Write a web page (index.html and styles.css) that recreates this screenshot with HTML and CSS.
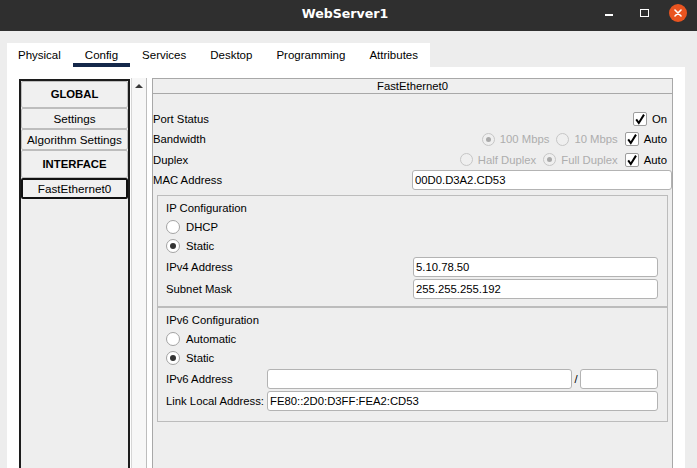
FILE: index.html
```html
<!DOCTYPE html>
<html>
<head>
<meta charset="utf-8">
<title>WebServer1</title>
<link rel="stylesheet" href="styles.css">
</head>
<body>
<div class="window">
  <header class="titlebar">
    <div class="title">WebServer1</div>
    <div class="controls">
      <span class="btn-min"></span>
      <span class="btn-max"></span>
      <span class="btn-close"><svg width="8" height="8" viewBox="0 0 8 8"><path d="M1 1 L7 7 M7 1 L1 7" stroke="#fff" stroke-width="1.6" stroke-linecap="round"/></svg></span>
    </div>
  </header>
  <div class="main">
    <nav class="tabs">
      <div class="tab">Physical</div>
      <div class="tab active">Config</div>
      <div class="tab">Services</div>
      <div class="tab">Desktop</div>
      <div class="tab">Programming</div>
      <div class="tab">Attributes</div>
    </nav>
    <div class="content">
      <aside class="list">
        <div class="item head">GLOBAL</div>
        <div class="item">Settings</div>
        <div class="item">Algorithm Settings</div>
        <div class="item head tall">INTERFACE</div>
        <div class="item selected">FastEthernet0</div>
      </aside>
      <div class="scrollbar"><span class="arrow"></span></div>
      <section class="panel">
        <div class="panel-head">FastEthernet0</div>
        <div class="panel-body">
          <div class="row">
            <div class="label">Port Status</div>
            <div class="opts">
              <div class="opt"><span class="check"><svg width="12" height="12" viewBox="0 0 12 12"><path d="M2.2 6.4 L4.8 10 L10 1.6" stroke="#000" stroke-width="2" fill="none"/></svg></span>On</div>
            </div>
          </div>
          <div class="row">
            <div class="label">Bandwidth</div>
            <div class="opts">
              <div class="opt disabled"><span class="radio dis on"></span>100 Mbps</div>
              <div class="opt disabled"><span class="radio dis"></span>10 Mbps</div>
              <div class="opt"><span class="check"><svg width="12" height="12" viewBox="0 0 12 12"><path d="M2.2 6.4 L4.8 10 L10 1.6" stroke="#000" stroke-width="2" fill="none"/></svg></span>Auto</div>
            </div>
          </div>
          <div class="row">
            <div class="label">Duplex</div>
            <div class="opts">
              <div class="opt disabled"><span class="radio dis"></span>Half Duplex</div>
              <div class="opt disabled"><span class="radio dis on"></span>Full Duplex</div>
              <div class="opt"><span class="check"><svg width="12" height="12" viewBox="0 0 12 12"><path d="M2.2 6.4 L4.8 10 L10 1.6" stroke="#000" stroke-width="2" fill="none"/></svg></span>Auto</div>
            </div>
          </div>
          <div class="row">
            <div class="label">MAC Address</div>
            <div class="input">00D0.D3A2.CD53</div>
          </div>

          <div class="group first">
            <div class="group-title">IP Configuration</div>
            <div class="rrow"><span class="radio"></span>DHCP</div>
            <div class="rrow"><span class="radio on"></span>Static</div>
            <div class="frow"><div class="flabel">IPv4 Address</div><div class="input">5.10.78.50</div></div>
            <div class="frow"><div class="flabel">Subnet Mask</div><div class="input">255.255.255.192</div></div>
          </div>
          <div class="group second">
            <div class="group-title">IPv6 Configuration</div>
            <div class="rrow"><span class="radio"></span>Automatic</div>
            <div class="rrow"><span class="radio on"></span>Static</div>
            <div class="frow"><div class="flabel short">IPv6 Address</div><div class="input"></div><span class="slash">/</span><div class="input prefix"></div></div>
            <div class="frow"><div class="flabel short">Link Local Address:</div><div class="input">FE80::2D0:D3FF:FEA2:CD53</div></div>
          </div>
        </div>
      </section>
    </div>
  </div>
</div>
</body>
</html>
```
FILE: styles.css
```css
* { box-sizing: border-box; margin: 0; padding: 0; }
html, body { height: 100%; }
body {
  font-family: "Liberation Sans", Arial, sans-serif;
  font-size: 11.3px;
  color: #000;
  background: #ededed;
  overflow: hidden;
}
.window { height: 468px; display: flex; flex-direction: column; }

.titlebar {
  height: 31px;
  flex: none;
  background: #2f2f2f;
  display: grid;
  grid-template-columns: 1fr auto 1fr;
  align-items: start;
}
.title {
  grid-column: 2;
  font-family: "DejaVu Sans", sans-serif;
  font-weight: bold;
  font-size: 12.6px;
  color: #fff;
  line-height: 28px;
  margin-right: 7px;
}
.controls {
  grid-column: 3;
  justify-self: end;
  display: flex;
  align-items: flex-start;
  padding-right: 10px;
}
.btn-min { width: 8px; height: 2px; background: #fff; margin-top: 14px; margin-right: 27px; }
.btn-max { width: 9px; height: 8px; border: 1.5px solid #fff; margin-top: 9px; margin-right: 20px; }
.btn-close {
  width: 18px; height: 18px; border-radius: 50%;
  background: #e95420; margin-top: 4px;
  display: flex; align-items: center; justify-content: center;
}

.main {
  flex: 1;
  min-height: 0;
  display: flex;
  flex-direction: column;
  padding: 12px 12px 0 7px;
}
.tabs { display: flex; background: #fff; align-self: flex-start; height: 24px; }
.tab {
  padding: 4px 12px 0;
  line-height: 16px;
  font-size: 11.5px;
  border-bottom: 4px solid transparent;
}
.tab:first-child { padding-left: 11px; }
.tab.active { border-bottom-color: #14284a; }

.content {
  flex: 1;
  min-height: 0;
  background: #fff;
  display: flex;
  padding: 11px 12px 0;
}
.list {
  width: 111px;
  flex: none;
  margin-top: 1px;
  border: 2px solid #1c1c1c;
  border-bottom: none;
  background: #eeeeee;
  display: flex;
  flex-direction: column;
  font-size: 11.7px;
}
.item {
  height: 21px;
  border: 1px solid #bdbdbd;
  border-radius: 2px;
  background: #f0f0f0;
  text-align: center;
  line-height: 20px;
  white-space: nowrap;
}
.item.head { font-weight: bold; height: 27px; line-height: 25px; font-size: 11.3px; }
.item.head.tall { height: 28px; line-height: 26px; }
.item.selected { border: 2px solid #111; line-height: 18px; }

.scrollbar {
  width: 16px;
  flex: none;
  margin: 0 5px 0 1px;
  background: #f7f7f7;
  border-left: 1px solid #d6d6d6;
  border-right: 1px solid #bdbdbd;
  display: flex;
  justify-content: center;
  padding-top: 6px;
}
.arrow {
  width: 0; height: 0;
  border-left: 4px solid transparent;
  border-right: 4px solid transparent;
  border-bottom: 4px solid #3a3a3a;
}

.panel {
  flex: 1;
  border: 1px solid #a8a8a8;
  border-bottom: none;
  background: #eeeeee;
  display: flex;
  flex-direction: column;
}
.panel-head {
  height: 15px;
  border-bottom: 1px solid #a8a8a8;
  text-align: center;
  line-height: 14px;
  background: #efefef;
}
.panel-body { padding-top: 14px; }

.row { display: flex; align-items: center; height: 20.5px; padding-top: 1px; }
.label { width: 259px; flex: none; }
.opts {
  flex: 1;
  display: flex;
  justify-content: flex-end;
  align-items: center;
  gap: 7px;
  padding-right: 5px;
}
.opt { display: flex; align-items: center; gap: 5px; }
.disabled { color: #adadad; }

.check {
  width: 14px; height: 14px;
  border: 1px solid #9d9d9d;
  border-radius: 2px;
  background: #fff;
  display: flex; align-items: center; justify-content: center;
}
.radio {
  width: 14px; height: 14px;
  flex: none;
  border-radius: 50%;
  border: 1px solid #a3a3a3;
  background: #fff;
  display: flex; align-items: center; justify-content: center;
}
.radio.on::after {
  content: "";
  width: 6px; height: 6px;
  border-radius: 50%;
  background: #333;
}
.radio.dis { width: 13px; height: 13px; border-color: #c6c6c6; background: #efefef; }
.radio.dis.on::after { width: 5px; height: 5px; background: #a9a9a9; }

.input {
  flex: 1;
  height: 20px;
  border: 1px solid #b3b3b3;
  border-radius: 3px;
  background: #fff;
  padding-left: 2px;
  line-height: 18px;
  white-space: nowrap;
  overflow: hidden;
}
.row .input { margin-top: -1px; }
.input.prefix { flex: none; width: 78px; }
.slash { width: 8px; text-align: center; flex: none; }

.group {
  margin: 0 4px;
  border: 1px solid #bcbcbc;
  padding: 4px 9px 7px 8px;
}
.group.first { margin-top: 5px; }
.group.second { padding-bottom: 10px; }
.group-title { line-height: 17px; }
.rrow { display: flex; align-items: center; gap: 6px; height: 20px; }
.frow { display: flex; align-items: center; height: 20px; margin-top: 1px; }
.frow + .frow { margin-top: 2px; }
.flabel { width: 247px; flex: none; white-space: nowrap; }
.flabel.short { width: 101px; }
.group .rrow:nth-child(2) { height: 19px; }
```
